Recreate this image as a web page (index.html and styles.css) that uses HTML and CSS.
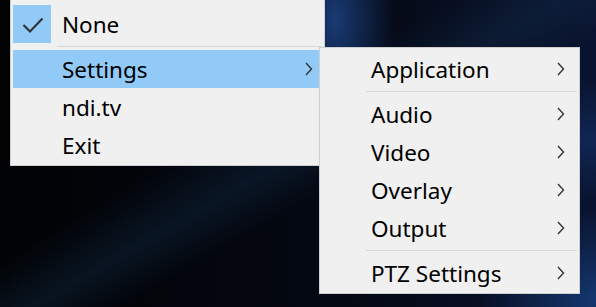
FILE: index.html
```html
<!DOCTYPE html>
<html lang="en">
<head>
    <meta charset="UTF-8">
    <title>Tray Menu</title>
    <link rel="stylesheet" href="styles.css">
</head>
<body>
    <div class="desktop">
        <div class="menu main-menu">
            <div class="item">
                <span class="check">
                    <svg width="38" height="38" viewBox="0 0 38 38"><path d="M10.5 20 L17 26.5 L29.5 13.5" fill="none" stroke="#333" stroke-width="2.2"/></svg>
                </span>
                <span class="label">None</span>
            </div>
            <div class="sep"></div>
            <div class="item active">
                <span class="label">Settings</span>
                <svg class="chevron" width="8" height="14" viewBox="0 0 8 14"><path d="M1 1 L6.5 7 L1 13" fill="none" stroke="#333" stroke-width="1.4"/></svg>

                <div class="menu sub-menu">
                    <div class="item">
                        <span class="label">Application</span>
                        <svg class="chevron" width="8" height="14" viewBox="0 0 8 14"><path d="M1 1 L6.5 7 L1 13" fill="none" stroke="#333" stroke-width="1.4"/></svg>
                    </div>
                    <div class="sep"></div>
                    <div class="item">
                        <span class="label">Audio</span>
                        <svg class="chevron" width="8" height="14" viewBox="0 0 8 14"><path d="M1 1 L6.5 7 L1 13" fill="none" stroke="#333" stroke-width="1.4"/></svg>
                    </div>
                    <div class="item">
                        <span class="label">Video</span>
                        <svg class="chevron" width="8" height="14" viewBox="0 0 8 14"><path d="M1 1 L6.5 7 L1 13" fill="none" stroke="#333" stroke-width="1.4"/></svg>
                    </div>
                    <div class="item">
                        <span class="label">Overlay</span>
                        <svg class="chevron" width="8" height="14" viewBox="0 0 8 14"><path d="M1 1 L6.5 7 L1 13" fill="none" stroke="#333" stroke-width="1.4"/></svg>
                    </div>
                    <div class="item">
                        <span class="label">Output</span>
                        <svg class="chevron" width="8" height="14" viewBox="0 0 8 14"><path d="M1 1 L6.5 7 L1 13" fill="none" stroke="#333" stroke-width="1.4"/></svg>
                    </div>
                    <div class="sep"></div>
                    <div class="item">
                        <span class="label">PTZ Settings</span>
                        <svg class="chevron" width="8" height="14" viewBox="0 0 8 14"><path d="M1 1 L6.5 7 L1 13" fill="none" stroke="#333" stroke-width="1.4"/></svg>
                    </div>
                </div>
            </div>
            <div class="item">
                <span class="label">ndi.tv</span>
            </div>
            <div class="item">
                <span class="label">Exit</span>
            </div>
        </div>
    </div>
</body>
</html>
```

FILE: styles.css
```css
* {
    margin: 0;
    padding: 0;
    box-sizing: border-box;
}

html, body {
    width: 596px;
    height: 307px;
    overflow: hidden;
}

body {
    font-family: "Noto Sans", "Open Sans", sans-serif;
    font-size: 22.5px;
    color: #000;
    background: #03050b;
}

.desktop {
    position: relative;
    width: 596px;
    height: 307px;
    padding-left: 10px;
    background:
        radial-gradient(ellipse 60px 120px at 335px 20px, rgba(30, 70, 140, 0.8), transparent),
        radial-gradient(ellipse 120px 90px at 600px 300px, rgba(25, 70, 140, 0.7), transparent),
        radial-gradient(ellipse 90px 60px at 590px 140px, rgba(20, 50, 110, 0.6), transparent),
        linear-gradient(150deg, transparent 40%, rgba(20, 50, 80, 0.35) 50%, transparent 58%),
        linear-gradient(90deg, #010204 0%, #050914 60%, #0a1430 100%);
}

.menu {
    background: #f0f0f0;
    border: 1px solid #cfcfcf;
}

.main-menu {
    width: 315px;
    border-top: 0;
    padding: 5px 0 1px;
}

.item {
    position: relative;
    height: 38px;
    margin: 0 2px;
    padding-left: 49px;
    display: flex;
    align-items: center;
    white-space: nowrap;
}

.item.active {
    background: #91c9f7;
}

.label {
    line-height: 38px;
    margin-top: 1px;
}

.check {
    position: absolute;
    left: 0;
    top: 0;
    width: 38px;
    height: 38px;
    background: #91c9f7;
}

.check svg {
    display: block;
}

.chevron {
    margin-left: auto;
    margin-right: 9px;
}

.sep {
    height: 1px;
    margin: 3px 2px 3px 46px;
    background: #d7d7d7;
}

.sub-menu {
    position: absolute;
    left: 306px;
    top: -3px;
    width: 261px;
    padding: 2px 0 1px;
    z-index: 2;
}

.sub-menu .chevron {
    margin-right: 12px;
}
```
